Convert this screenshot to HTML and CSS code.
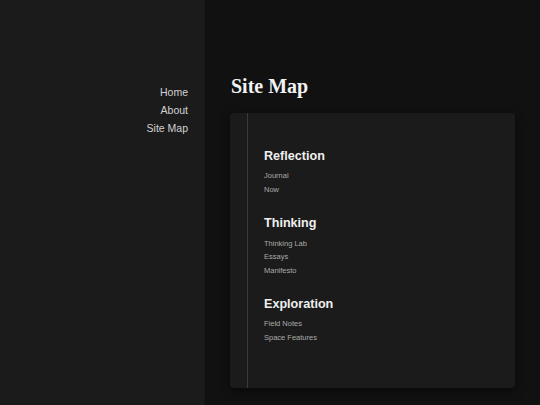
FILE: index.html
```html
<!DOCTYPE html>
<html lang="en">
<head>
<meta charset="utf-8">
<title>Site Map</title>
<link rel="stylesheet" href="styles.css">
</head>
<body>
<div class="layout">
  <aside class="sidebar">
    <nav class="nav">
      <a href="#" class="nav-link">Home</a>
      <a href="#" class="nav-link">About</a>
      <a href="#" class="nav-link">Site Map</a>
    </nav>
  </aside>
  <main class="content">
    <h1 class="page-title">Site Map</h1>
    <div class="card">
      <div class="tree">
        <section class="group">
          <h2 class="group-title">Reflection</h2>
          <ul class="links">
            <li><a href="#">Journal</a></li>
            <li><a href="#">Now</a></li>
          </ul>
        </section>
        <section class="group">
          <h2 class="group-title">Thinking</h2>
          <ul class="links">
            <li><a href="#">Thinking Lab</a></li>
            <li><a href="#">Essays</a></li>
            <li><a href="#">Manifesto</a></li>
          </ul>
        </section>
        <section class="group">
          <h2 class="group-title">Exploration</h2>
          <ul class="links">
            <li><a href="#">Field Notes</a></li>
            <li><a href="#">Space Features</a></li>
          </ul>
        </section>
      </div>
    </div>
  </main>
</div>
</body>
</html>
```
FILE: styles.css
```css
html, body {
  margin: 0;
  padding: 0;
  background: #111111;
  font-family: "Liberation Sans", Arial, sans-serif;
}

.layout {
  display: flex;
  min-height: 100vh;
}

/* left navigation column */
.sidebar {
  width: 205px;
  flex: none;
  background: #1b1b1b;
  border-right: 1px solid #171717;
  box-sizing: border-box;
  padding: 82.8px 16px 0 0;
}

.nav {
  display: flex;
  flex-direction: column;
  align-items: flex-end;
}

.nav-link {
  color: #d2d2d2;
  text-decoration: none;
  font-size: 10.5px;
  line-height: 18.2px;
}

/* main column */
.content {
  flex: 1;
  padding: 73.5px 25px 0;
}

.page-title {
  margin: 0 0 15.5px 1px;
  font-family: "Liberation Serif", "Times New Roman", serif;
  font-weight: bold;
  font-size: 20px;
  line-height: 24px;
  color: #f2f2f2;
}

.card {
  background: #1b1b1b;
  border-radius: 4px;
  box-shadow: 0 3px 10px rgba(0, 0, 0, 0.55);
  padding: 0 17px;
  height: 275px;
  box-sizing: border-box;
  display: flex;
}

.tree {
  flex: 1;
  border-left: 1px solid #3a3a3a;
  padding: 35px 16px 0;
}

.group {
  margin-bottom: 19px;
}

.group-title {
  margin: 0 0 4.3px;
  font-size: 12.6px;
  line-height: 17px;
  font-weight: bold;
  color: #efefef;
}

.links {
  list-style: none;
  margin: 0;
  padding: 0;
}

.links li {
  font-size: 7.5px;
  line-height: 13.5px;
}

.links a {
  color: #aaaaaa;
  text-decoration: none;
}
```
